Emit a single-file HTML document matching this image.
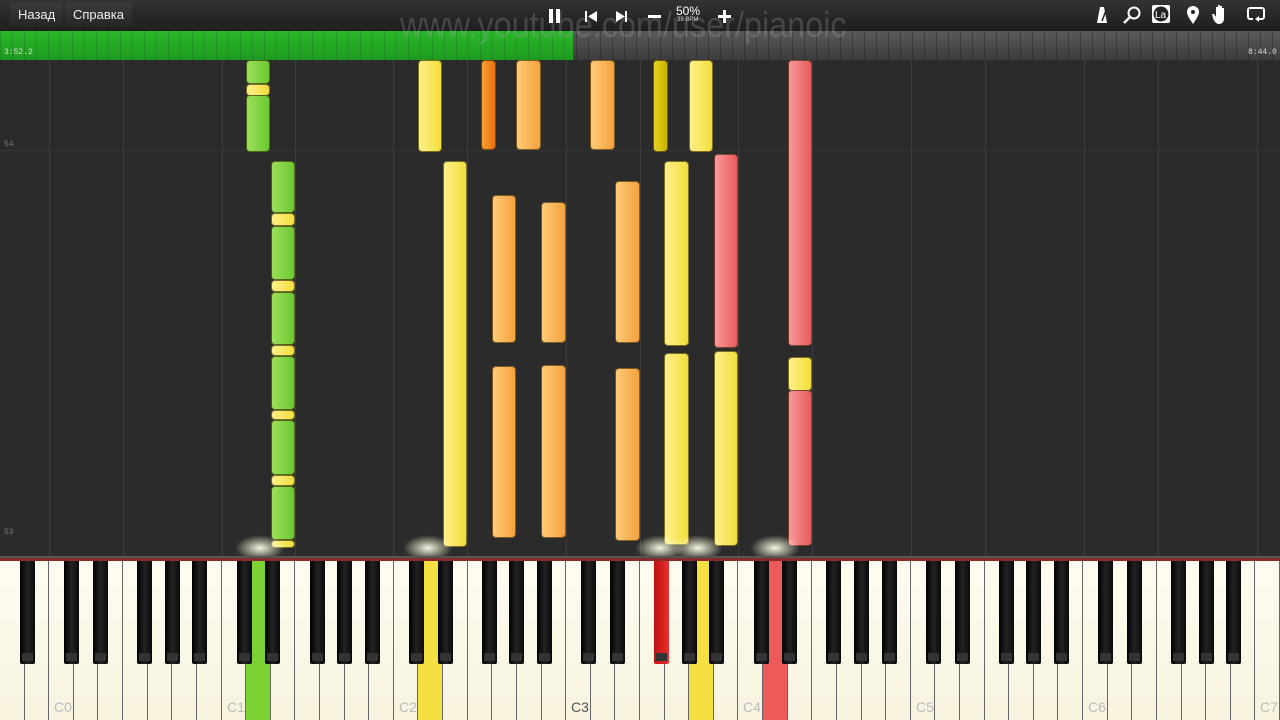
<!DOCTYPE html>
<html><head><meta charset="utf-8"><style>
*{margin:0;padding:0;box-sizing:border-box}
body{width:1280px;height:720px;overflow:hidden;background:#2b2b2b;position:relative;font-family:"Liberation Sans",sans-serif}
#top{position:absolute;left:0;top:0;width:1280px;height:31px;background:linear-gradient(#333,#1e1e1e)}
.btn{position:absolute;top:3px;height:24px;background:linear-gradient(#3a3a3a,#262626);border-radius:3px;color:#eee;font-size:13px;line-height:24px;padding:0 8px}
#prog{position:absolute;left:0;top:31px;width:1280px;height:29px;background-image:repeating-linear-gradient(90deg,rgba(0,0,0,.25) 0 1px,transparent 1px 12px),linear-gradient(#5a5a5a,#3c3c3c)}
#green{position:absolute;left:0;top:31px;width:573px;height:29px;background:repeating-linear-gradient(90deg,rgba(0,0,0,.12) 0 1px,transparent 1px 12px),linear-gradient(#2ab82a,#1e9a1e)}
.t{position:absolute;font-size:8px;color:#ddd;font-family:"Liberation Mono",monospace}
#wm{position:absolute;left:400px;top:4px;font-size:36px;color:rgba(160,160,160,.28);white-space:nowrap;transform:scaleX(.9);transform-origin:0 0}
.vl{position:absolute;top:60px;width:1px;height:497px;background:#3d3d3d}
.n{position:absolute;border-radius:4px;border:1px solid rgba(40,30,0,.6)}
.g{background:linear-gradient(90deg,#9be05a,#6cc830)}
.y{background:linear-gradient(90deg,#fff08a,#f2de3c)}
.o{background:linear-gradient(90deg,#ffca78,#f4a23e)}
.do{background:linear-gradient(90deg,#f8a030,#e8700c)}
.dy{background:linear-gradient(90deg,#e8d420,#c8b000)}
.r{background:linear-gradient(90deg,#f89a9a,#e85c5c)}
.glow{position:absolute;width:50px;height:26px;border-radius:50%;background:radial-gradient(rgba(255,255,235,.95),rgba(255,255,220,.4) 40%,transparent 70%)}
#kb{position:absolute;left:0;top:556px;width:1280px;height:164px;background:#111}
.w{position:absolute;top:5px;height:159px;background:linear-gradient(#fffdf0,#f7f3df);border-right:1px solid #666}
.b{position:absolute;top:5px;width:15px;height:103px;background:linear-gradient(90deg,#000,#222 50%,#0a0a0a);border-radius:0 0 2px 2px}
.b:after{content:"";position:absolute;left:2px;right:2px;bottom:3px;height:8px;background:#333}
.lab{position:absolute;bottom:5px;font-size:14px;color:#bbb}
.ic{position:absolute;top:6px}
</style></head><body>
<div id="top"></div>
<div class="btn" style="left:10px">Назад</div>
<div class="btn" style="left:65px">Справка</div>
<div id="prog"></div><div id="green"></div>
<div class="t" style="left:4px;top:48px">3:52.2</div>
<div class="t" style="left:1248px;top:48px">8:44.0</div>
<div id="wm">www.youtube.com/user/pianoic</div>
<svg class="ic" style="left:546px" width="200" height="22">
<rect x="3" y="3" width="4" height="14" fill="#fff"/><rect x="10" y="3" width="4" height="14" fill="#fff"/>
<rect x="39" y="5" width="2" height="11" fill="#fff"/><path d="M51 5v11l-9-5.5z" fill="#fff"/>
<path d="M70 5v11l9-5.5z" fill="#fff"/><rect x="79" y="5" width="2" height="11" fill="#fff"/>
<rect x="102" y="9" width="13" height="3" fill="#fff"/>
<rect x="172" y="9" width="13" height="3" fill="#fff"/><rect x="177" y="4" width="3" height="13" fill="#fff"/>
</svg>
<div style="position:absolute;left:676px;top:4px;color:#fff;font-size:12px">50%</div>
<div style="position:absolute;left:677px;top:17px;color:#ddd;font-size:6px">39 BPM</div>
<svg class="ic" style="left:1085px;top:4px" width="190" height="24">
<path d="M15 3h4l3 16h-10z" fill="#fff"/><path d="M17 17l5-13" stroke="#222" stroke-width="1.5"/>
<circle cx="49" cy="9" r="5.5" fill="none" stroke="#fff" stroke-width="2"/><path d="M45 13l-6 6" stroke="#fff" stroke-width="2.5"/>
<rect x="67" y="1" width="18" height="18" rx="2" fill="#fff"/><circle cx="76" cy="10" r="7.5" fill="#222"/><text x="70" y="14" font-size="10" fill="#fff" font-family="Liberation Sans">La</text>
<path d="M108 20c-4-6-6-9-6-12a6 6 0 0 1 12 0c0 3-2 6-6 12z" fill="#fff"/><circle cx="108" cy="8" r="2" fill="#222"/>
<path d="M134 20c-3 0-5-3-6-6l-1-4 2 0 2 3v-10h2v7v-9h2v9v-8h2v8v-6h2v10c0 4-2 6-5 6z" fill="#fff"/>
<path d="M168 15h-3a2 2 0 0 1-2-2v-7a2 2 0 0 1 2-2h12a2 2 0 0 1 2 2v7a2 2 0 0 1-2 2h-4" fill="none" stroke="#fff" stroke-width="2"/><path d="M174 12l-4 3 4 3z" fill="#fff"/>
</svg>
<div class="t" style="left:4px;top:140px;color:#777">54</div>
<div class="t" style="left:4px;top:528px;color:#777">53</div>
<div id="lines"></div>
<div id="notes"></div>
<div id="kb"><div style="position:absolute;left:0;top:0;width:1280px;height:2px;background:#555"></div><div style="position:absolute;left:0;top:2px;width:1280px;height:3px;background:#8a2a2a"></div></div>
<script>
var W=1280/52;
var lines=[49,123,222,295,393,467,566,640,738,812,911,985,1084,1158,1257],h='';
lines.forEach(function(x){h+='<div class="vl" style="left:'+x+'px"></div>'});
h+='<div style="position:absolute;left:0;top:150px;width:1280px;height:1px;background:#363636"></div>';
document.getElementById('lines').innerHTML=h;
var N=[[246,24,60,84,'g'],[246,24,84,96,'y'],[246,24,95,152,'g'],
[418,24,60,152,'y'],[481,15,60,150,'do'],[516,25,60,150,'o'],[590,25,60,150,'o'],[653,15,60,152,'dy'],[689,24,60,152,'y'],
[788,24,60,346,'r'],[788,24,357,391,'y'],[788,24,390,546,'r'],
[443,24,161,547,'y'],[492,24,195,343,'o'],[492,24,366,538,'o'],[541,25,202,343,'o'],[541,25,365,538,'o'],
[615,25,181,343,'o'],[615,25,368,541,'o'],[664,25,161,346,'y'],[664,25,353,545,'y'],[714,24,154,348,'r'],[714,24,351,546,'y']];
var segs=[[161,213,'g'],[213,226,'y'],[226,280,'g'],[280,292,'y'],[292,345,'g'],[345,356,'y'],[356,410,'g'],[410,420,'y'],[420,475,'g'],[475,486,'y'],[486,540,'g'],[540,548,'y']];
segs.forEach(function(s){N.push([271,24,s[0],s[1],s[2]])});
h='';N.forEach(function(n){h+='<div class="n '+n[4]+'" style="left:'+n[0]+'px;width:'+n[1]+'px;top:'+n[2]+'px;height:'+(n[3]-n[2])+'px"></div>'});
[260,428,660,698,775].forEach(function(x){h+='<div class="glow" style="left:'+(x-25)+'px;top:535px"></div>'});
document.getElementById('notes').innerHTML=h;
var L='ABCDEFG',kb='',pw={10:'#7cd232',17:'#f4e040',28:'#f4e040',31:'#ec5a5a'};
var off={A:3,C:-2,D:2,F:-3,G:0};
for(var i=0;i<52;i++){var x=Math.round(i*W),x2=Math.round((i+1)*W);
 var bg=pw[i]?'background:'+pw[i]+';':'';
 kb+='<div class="w" style="left:'+x+'px;width:'+(x2-x)+'px;'+bg+'">';
 if(L[i%7]=='C'){kb+='<span class="lab" style="left:5px;'+(i==23?'color:#555':'')+'">C'+Math.floor((i-2)/7)+'</span>'}
 kb+='</div>';}
for(var i=0;i<51;i++){var c=L[i%7];if(c=='B'||c=='E')continue;
 var bx=Math.round((i+1)*W-7.5+off[c]);var st=(i==26)?'background:linear-gradient(90deg,#c01010,#e83030);':'';
 kb+='<div class="b" style="left:'+bx+'px;'+st+'"></div>';}
document.getElementById('kb').innerHTML+=kb;
</script>
</body></html>
